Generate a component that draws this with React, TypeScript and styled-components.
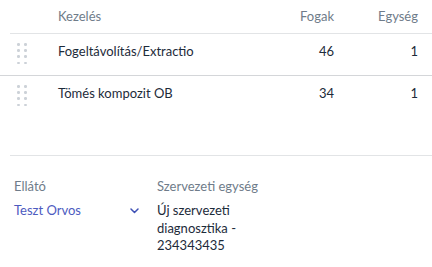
import React from "react";
import styled, { createGlobalStyle } from "styled-components";

const Global = createGlobalStyle`
  html, body { margin: 0; padding: 0; background: #ffffff; }
  body {
    font-family: "Lato", "Noto Sans", "Liberation Sans", sans-serif;
    font-size: 13px;
    color: #1d2b3a;
    -webkit-font-smoothing: antialiased;
  }
`;

const Page = styled.div`
  width: 432px;
  height: 267px;
  overflow: hidden;
  background: #fff;
`;

const Table = styled.div`
  display: flex;
  flex-direction: column;
`;

const Row = styled.div<{ $inset?: boolean; $header?: boolean; $border?: "light" | "strong" | "none" }>`
  display: grid;
  grid-template-columns: ${(p) => (p.$inset ? "48px" : "58px")} 1fr 100px 84px;
  align-items: start;
  margin-left: ${(p) => (p.$inset ? "10px" : "0")};
  box-sizing: content-box;
  height: ${(p) => (p.$header ? "26px" : "33px")};
  padding: ${(p) => (p.$header ? "7px 14px 0 0" : "8px 14px 0 0")};
  line-height: 18px;
  border-bottom: ${(p) =>
    p.$border === "light" ? "1px solid #e2e4e6" : p.$border === "strong" ? "1px solid #d4d6d9" : "none"};
  color: ${(p) => (p.$header ? "#6f7c8a" : "#1d2b3a")};
`;

const Cell = styled.div<{ $align?: "left" | "right" }>`
  text-align: ${(p) => p.$align ?? "left"};
  white-space: nowrap;
`;

const HandleCell = styled.div`
  padding-left: 17px;
  padding-top: 1px;
`;

const Handle = styled.div`
  display: grid;
  grid-template-columns: repeat(2, 2.5px);
  grid-auto-rows: 2.5px;
  column-gap: 4.5px;
  row-gap: 3.7px;
`;

const Dot = styled.span`
  display: block;
  width: 2.5px;
  height: 2.5px;
  border-radius: 50%;
  background: #cdd2d8;
`;

const Footer = styled.div`
  margin-top: 38px;
  margin-left: 10px;
  border-top: 1px solid #e2e4e6;
  padding: 21px 14px 0 4px;
  display: grid;
  grid-template-columns: 143px 1fr;
`;

const Field = styled.div`
  display: flex;
  flex-direction: column;
  gap: 7px;
`;

const Label = styled.div`
  color: #6f7c8a;
  line-height: 18px;
`;

const Select = styled.div`
  display: flex;
  align-items: center;
  justify-content: space-between;
  width: 125px;
  color: #4d5bbf;
  line-height: 17.5px;
`;

const Value = styled.div`
  color: #1d2b3a;
  line-height: 17.5px;
  width: 110px;
`;

const rows = [
  { name: "Fogeltávolítás/Extractio", teeth: "46", units: "1" },
  { name: "Tömés kompozit OB", teeth: "34", units: "1" },
];

function DragHandle() {
  return (
    <HandleCell>
      <Handle>
        {Array.from({ length: 8 }).map((_, i) => (
          <Dot key={i} />
        ))}
      </Handle>
    </HandleCell>
  );
}

function Chevron() {
  return (
    <svg width="9" height="6" viewBox="0 0 9 6" fill="none">
      <polyline points="1,1 4.5,4.5 8,1" stroke="#3f51b5" strokeWidth="1.5" strokeLinecap="round" strokeLinejoin="round" />
    </svg>
  );
}

export default function App() {
  return (
    <Page>
      <Global />
      <Table>
        <Row $inset $header $border="light">
          <Cell />
          <Cell>Kezelés</Cell>
          <Cell $align="right">Fogak</Cell>
          <Cell $align="right">Egység</Cell>
        </Row>
        {rows.map((r, i) => (
          <Row key={r.name} $border={i === 0 ? "strong" : "none"}>
            <DragHandle />
            <Cell>{r.name}</Cell>
            <Cell $align="right">{r.teeth}</Cell>
            <Cell $align="right">{r.units}</Cell>
          </Row>
        ))}
      </Table>
      <Footer>
        <Field>
          <Label>Ellátó</Label>
          <Select>
            <span>Teszt Orvos</span>
            <Chevron />
          </Select>
        </Field>
        <Field>
          <Label>Szervezeti egység</Label>
          <Value>Új szervezeti diagnosztika - 234343435</Value>
        </Field>
      </Footer>
    </Page>
  );
}
